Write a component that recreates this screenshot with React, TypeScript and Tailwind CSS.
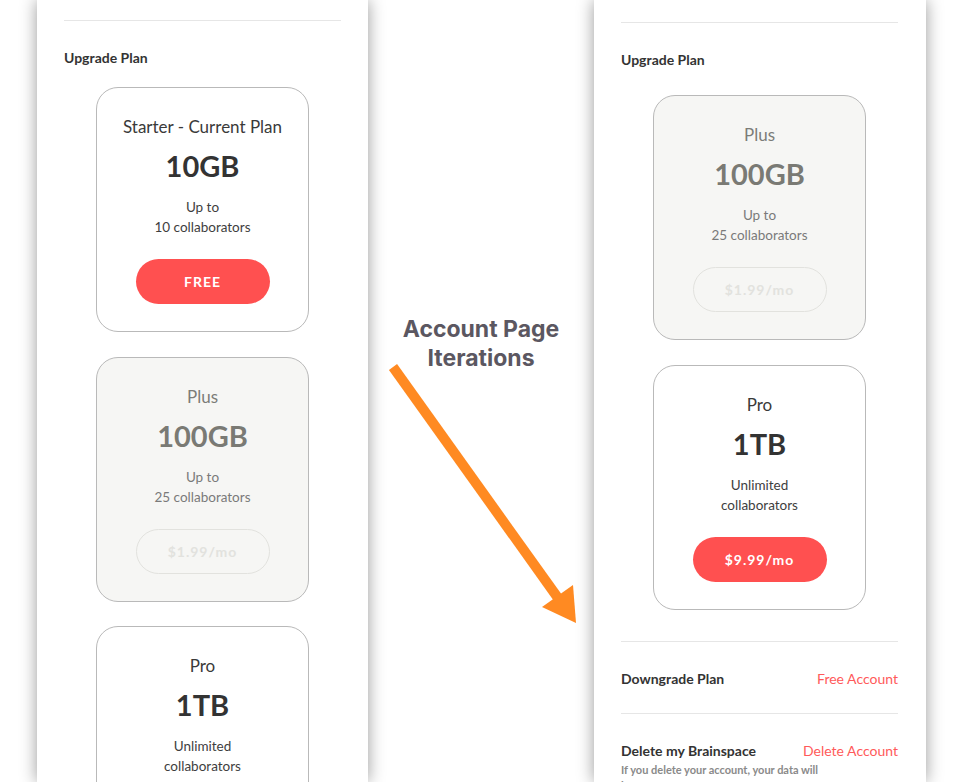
import React from 'react';

interface Plan {
  title: string;
  size: string;
  lines: string[];
  price: string;
  muted?: boolean;
}

const PlanCard: React.FC<{ plan: Plan; className?: string }> = ({ plan, className = '' }) => {
  const muted = plan.muted;
  return (
    <div
      className={`mx-auto flex h-[245px] w-[213px] flex-col items-center rounded-[22px] border border-[#b9b9b9] pt-[27px] ${
        muted ? 'bg-[#f6f6f4]' : 'bg-white'
      } ${className}`}
    >
      <div className={`text-[17px] leading-[24px] ${muted ? 'text-[#7c7c78]' : 'text-[#3a3a3a]'}`}>{plan.title}</div>
      <div
        className={`mt-[9px] text-[29px] font-bold leading-[36px] ${muted ? 'text-[#7a7a74]' : 'text-[#333333]'}`}
      >
        {plan.size}
      </div>
      <div className={`mt-[13px] text-center text-[13.5px] leading-[20px] ${muted ? 'text-[#7a7a7a]' : 'text-[#3e3e3e]'}`}>
        {plan.lines.map((l) => (
          <div key={l}>{l}</div>
        ))}
      </div>
      {muted ? (
        <div className="mt-[22px] flex h-[45px] w-[134px] items-center justify-center rounded-full border-[1.5px] border-[#e2e2de] text-[14px] font-bold tracking-[1px] text-[#e2e2de]">
          {plan.price}
        </div>
      ) : (
        <div className="mt-[22px] flex h-[45px] w-[134px] items-center justify-center rounded-full bg-[#ff5050] text-[14px] font-bold tracking-[1px] text-white">
          {plan.price}
        </div>
      )}
    </div>
  );
};

const starter: Plan = { title: 'Starter - Current Plan', size: '10GB', lines: ['Up to', '10 collaborators'], price: 'FREE' };
const plus: Plan = { title: 'Plus', size: '100GB', lines: ['Up to', '25 collaborators'], price: '$1.99/mo', muted: true };
const pro: Plan = { title: 'Pro', size: '1TB', lines: ['Unlimited', 'collaborators'], price: '$9.99/mo' };

export default function App() {
  return (
    <div
      className="flex h-[782px] w-[960px] overflow-hidden bg-white pl-[37px]"
      style={{ fontFamily: 'Lato, "Open Sans", sans-serif' }}
    >
      {/* first iteration */}
      <div className="relative z-10 w-[331px] shrink-0 bg-white px-[27px] pt-[20px] shadow-[0_0_16px_rgba(0,0,0,0.4)]">
        <div className="h-px bg-[#e6e6e6]" />
        <div className="mt-[27px] text-[14px] font-bold leading-[20px] text-[#333333]">Upgrade Plan</div>
        <PlanCard plan={starter} className="mt-[19px]" />
        <PlanCard plan={plus} className="mt-[25px]" />
        <PlanCard plan={pro} className="mt-[24px]" />
      </div>

      {/* label + arrow */}
      <div className="relative w-[226px] shrink-0">
        <div
          className="pt-[315px] text-center text-[23px] font-bold leading-[29px] text-[#5b5761]"
          style={{ fontFamily: 'Inter, Roboto, sans-serif' }}
        >
          Account Page
          <br />
          Iterations
        </div>
        <svg className="absolute left-0 top-0" width="226" height="782" viewBox="0 0 226 782">
          <line x1="25" y1="367" x2="190" y2="598" stroke="#ff8a22" strokeWidth="10" />
          <polygon points="174,607 205,585 208,623" fill="#ff8a22" />
        </svg>
      </div>

      {/* second iteration */}
      <div className="relative z-10 w-[332px] shrink-0 bg-white pl-[27px] pr-[28px] pt-[22px] shadow-[0_0_16px_rgba(0,0,0,0.4)]">
        <div className="h-px bg-[#e6e6e6]" />
        <div className="mt-[27px] text-[14px] font-bold leading-[20px] text-[#333333]">Upgrade Plan</div>
        <PlanCard plan={plus} className="mt-[25px]" />
        <PlanCard plan={pro} className="mt-[25px]" />
        <div className="mt-[31px] h-px bg-[#e6e6e6]" />
        <div className="mt-[27px] flex items-center justify-between text-[14px] leading-[20px]">
          <span className="font-bold text-[#333333]">Downgrade Plan</span>
          <span className="text-[#ff5a5a]">Free Account</span>
        </div>
        <div className="mt-[24px] h-px bg-[#e6e6e6]" />
        <div className="mt-[27px] flex items-center justify-between text-[14px] leading-[20px]">
          <span className="font-bold text-[#333333]">Delete my Brainspace</span>
          <span className="text-[#ff5a5a]">Delete Account</span>
        </div>
        <div className="mt-px w-[200px] text-[11px] font-bold leading-[16px] text-[#8a8a8a]">
          If you delete your account, your data will be gone forever.
        </div>
      </div>
    </div>
  );
}
